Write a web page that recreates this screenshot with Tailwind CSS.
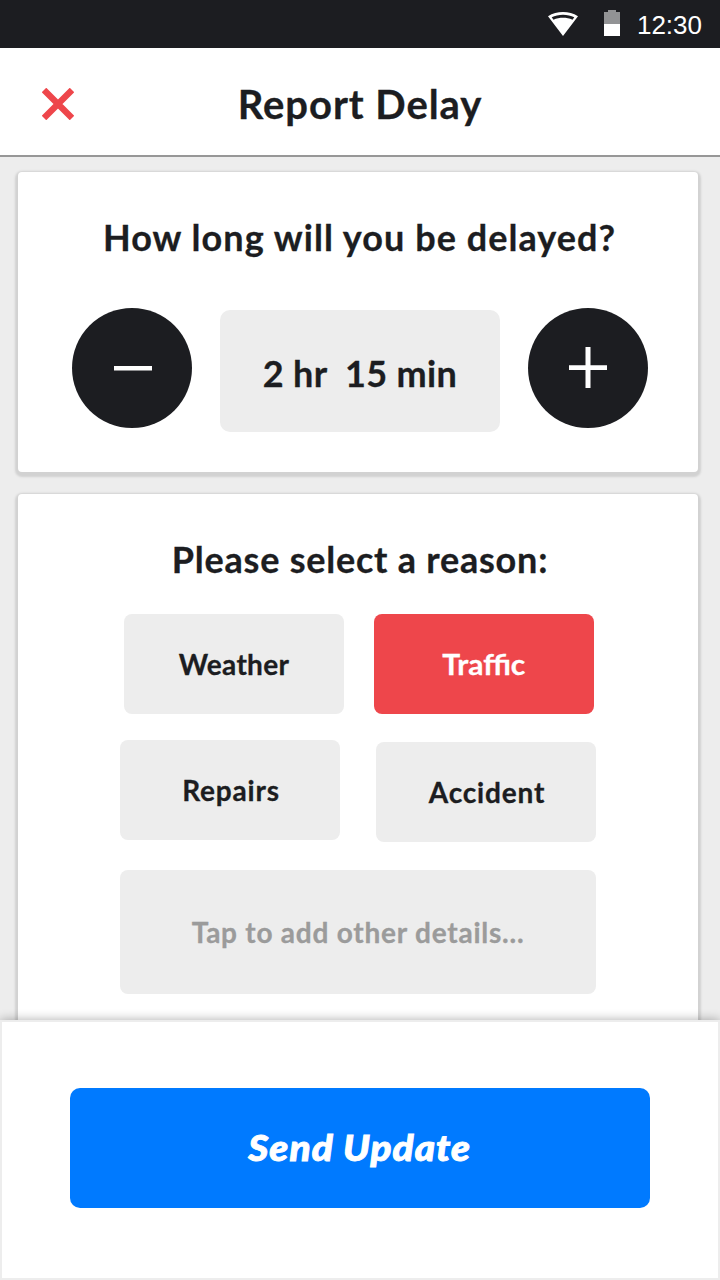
<!DOCTYPE html>
<html lang="en">
<head>
<meta charset="utf-8">
<title>Report Delay</title>
<script src="https://cdn.jsdelivr.net/npm/@tailwindcss/browser@4"></script>
</head>
<body class="bg-[#ededed]">
<div class="relative flex h-[1280px] w-[720px] flex-col overflow-hidden bg-[#ededed] font-['Lato',sans-serif] font-bold text-[#1c1d21] [-webkit-text-stroke:0.3px_currentColor]">
  <div class="flex h-12 shrink-0 items-center justify-end bg-[#1c1d21] pr-[18px] [-webkit-text-stroke:0px]">
    <svg class="mr-6 h-6 w-8" viewBox="0 0 32 24" fill="#fff"><path fill-rule="evenodd" d="M0 4.200C9-1.400 21-1.400 30 4.200L15 24ZM3.700 5.300L5.500 7.800C11.500 5.200 18.500 5.200 24.500 7.800L26.300 5.300C20 1.800 10 1.800 3.700 5.300Z"/></svg>
    <svg class="mr-[17px] mb-0.5 h-[26px] w-4" viewBox="0 0 16 26"><path fill="#929395" d="M4 0h8v2h4v12H0V2h4z"/><path fill="#fff" d="M0 14h16v12H0z"/></svg>
    <span class="pt-0.5 font-['Liberation_Sans',sans-serif] text-[26px] leading-none font-normal text-white">12:30</span>
  </div>
  <header class="grid h-[109px] shrink-0 grid-cols-[116px_1fr_116px] items-center border-b-2 border-[#979797] bg-white">
    <svg class="mt-[5px] ml-[42px] size-8" viewBox="0 0 32 32" fill="none" stroke="#ee464b" stroke-width="6.400"><path d="M2 2l28 28M30 2L2 30"/></svg>
    <h1 class="pt-1 text-center text-[40px] leading-[48px] tracking-[0.95px]">Report Delay</h1>
  </header>
  <main class="flex flex-1 flex-col gap-[22px] pt-[15px] pr-[22px] pl-[18px]">
    <section class="flex h-[300px] shrink-0 flex-col items-center rounded-[4px] bg-white pt-[43px] shadow-[0_2px_2px_3px_#d2d2d2]">
      <h2 class="pl-[3px] text-[36px] leading-[44px] tracking-[1.05px]">How long will you be delayed?</h2>
      <div class="mt-[49px] ml-1 flex w-[576px] items-start justify-between">
        <button class="flex size-[120px] items-center justify-center rounded-full bg-[#1c1d21]"><svg class="size-[60px]" viewBox="0 0 60 60" fill="#fff"><path d="M12 28h38v4.600H12z"/></svg></button>
        <div class="mt-0.5 flex h-[122px] w-[280px] items-center justify-center rounded-[10px] bg-[#ededed] pt-1 text-[36px] tracking-[0.35px] whitespace-pre">2 hr  15 min</div>
        <button class="flex size-[120px] items-center justify-center rounded-full bg-[#1c1d21]"><svg class="size-[60px]" viewBox="0 0 60 60" fill="#fff"><path d="M11 27.300h38v4.600H11zM27.500 9h5v41h-5z"/></svg></button>
      </div>
    </section>
    <section class="flex h-[600px] shrink-0 flex-col items-center rounded-[4px] bg-white pt-[43px] shadow-[0_2px_2px_3px_#d2d2d2]">
      <h2 class="pl-1 text-[36px] leading-[44px] tracking-[0.77px]">Please select a reason:</h2>
      <div class="mt-[33px] ml-0.5 flex w-[470px] justify-between text-[28px]">
        <button class="h-[100px] w-[220px] rounded-[8px] bg-[#ededed] tracking-[0.3px]">Weather</button>
        <button class="h-[100px] w-[220px] rounded-[8px] bg-[#ee464b] text-white"><span class="inline-block scale-x-[1.07] [-webkit-text-stroke:0.3px_#fff]">Traffic</span></button>
      </div>
      <div class="mt-[26px] flex w-[476px] items-start justify-between text-[28px] tracking-[0.82px]">
        <button class="h-[100px] w-[220px] rounded-[8px] bg-[#ededed] pl-0.5">Repairs</button>
        <button class="mt-0.5 h-[100px] w-[220px] rounded-[8px] bg-[#ededed] pl-0.5">Accident</button>
      </div>
      <div class="mt-7 flex h-[124px] w-[476px] items-center justify-center rounded-[8px] bg-[#ededed] text-[28px] tracking-[0.77px] text-[#9b9b9b] [-webkit-text-stroke:0.3px_#9b9b9b]">Tap to add other details...</div>
    </section>
  </main>
  <footer class="absolute inset-x-0 bottom-0 flex h-[260px] justify-center border-2 border-[#ededed] bg-white pt-[66px] shadow-[0_0_10px_rgba(0,0,0,0.33)]">
    <button class="h-[120px] w-[580px] rounded-[10px] bg-[#007aff] pb-0.5 text-[36px] font-black tracking-[1px] text-white italic"><span class="inline-block scale-x-[1.075] [-webkit-text-stroke:0.9px_#fff]">Send Update</span></button>
  </footer>
</div>
</body>
</html>
